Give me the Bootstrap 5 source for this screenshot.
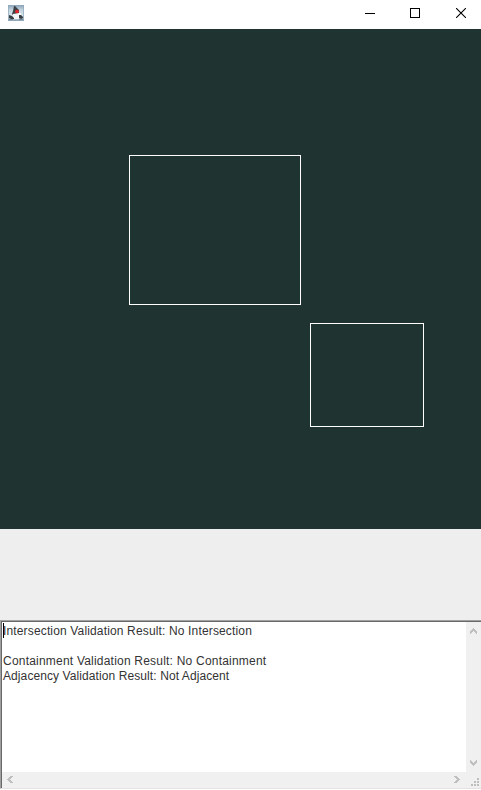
<!DOCTYPE html>
<html lang="en">
<head>
<meta charset="utf-8">
<title>Rectangles</title>
<link href="https://cdn.jsdelivr.net/npm/bootstrap@5.3.0/dist/css/bootstrap.min.css" rel="stylesheet">
<style>
body{font-family:"Liberation Sans",Arial,sans-serif;font-size:12px;line-height:15px;color:#333;background:#eee}
svg{display:block}
.app-window{height:790px}
.title-bar{height:29px;background:#fff;padding-left:8px}
.win-btn{height:26px;padding:0;border:0;background:none}
.btn-min{width:38px}
.btn-max{width:52px}
.btn-quit{width:40px}
.draw-area{height:500px;background:#1f3331}
.spacer-panel{height:91px;background:#eee}
.output-pane{height:169px;border-left:1px solid #a0a0a0;border-top:1px solid #a0a0a0;border-bottom:1px solid #e3e3e3}
.output-inner{border-left:1px solid #696969;border-top:1px solid #696969;background:#f0f0f0}
.output-text{background:#fff;height:150px;padding:2px 0 0 1px;white-space:pre}
.caret{width:1px;height:15px;background:#000;margin:-1px -1px 1px 0}
.v-bar{width:15px;height:150px;padding:6px 0}
.h-bar{height:16px;padding:0 5px 1px 4px}
.grip-area{width:15px;height:16px}
.base-line{height:1px;background:#fff}
.l1{letter-spacing:.15px}
.l2{letter-spacing:.21px}
.l3{letter-spacing:.09px}
</style>
<script src="https://cdn.jsdelivr.net/npm/bootstrap@5.3.0/dist/js/bootstrap.bundle.min.js"></script>
</head>
<body>
<div class="app-window d-flex flex-column overflow-hidden">
  <header class="title-bar d-flex justify-content-between">
    <svg class="mt-1" width="16" height="17" viewBox="0 0 16 17">
      <defs><linearGradient id="g" x2="0" y2="1"><stop stop-color="#8ba3b6"/><stop offset=".3" stop-color="#c3d3df"/><stop offset=".7" stop-color="#dce6ed"/><stop offset="1" stop-color="#8da2b2"/></linearGradient></defs>
      <rect y="1" width="16" height="16" fill="url(#g)"/>
      <path d="M.5 1.500h15v15H.5z" fill="none" stroke="#8fa9bc" stroke-opacity=".7"/>
      <path d="M6 2h1l2 2 2 2v3l-2 1-4 1-1-1 1-3z" fill="#3d4247"/>
      <path d="M5 10l6-1 1 4-1 2H5z" fill="#f4f5f6"/>
      <path d="M1 11l3 1 2 2v1H3l-2-1zM11 10l2 1 2 2v1l-2 1-2-1z" fill="#363d43"/>
      <path d="M11 9h2v2h-2z" fill="#fff"/>
      <ellipse cx="9" cy="7.500" rx="2" ry="1.800" fill="#e3242b"/>
      <path d="M1 15.500h4M11 15.500h4" stroke="#75899a"/>
    </svg>
    <div class="d-flex">
      <button class="win-btn btn-min d-flex align-items-center justify-content-center" aria-label="Minimize"><svg width="10" height="11" shape-rendering="crispEdges"><path d="M0 5.500h10" stroke="#000"/></svg></button>
      <button class="win-btn btn-max d-flex align-items-center justify-content-center" aria-label="Maximize"><svg width="10" height="10" shape-rendering="crispEdges"><path d="M.5.5h9v9h-9z" fill="none" stroke="#000"/></svg></button>
      <button class="win-btn btn-quit d-flex align-items-center justify-content-center" aria-label="Close"><svg width="10" height="10"><path d="M0 0l10 10M10 0L0 10" stroke="#000" stroke-width="1.100"/></svg></button>
    </div>
  </header>
  <main class="draw-area">
    <svg width="481" height="500" fill="none" stroke="#fff" shape-rendering="crispEdges">
      <rect x="129.500" y="126.500" width="171" height="149"/>
      <rect x="310.500" y="294.500" width="113" height="103"/>
    </svg>
  </main>
  <div class="spacer-panel"></div>
  <section class="output-pane">
    <div class="output-inner">
      <div class="d-flex">
        <div class="output-text flex-grow-1"><div class="d-flex"><span class="caret"></span><span class="l1">Intersection Validation Result: No Intersection</span></div><div>&nbsp;</div><div><span class="l2">Containment Validation Result: No Containment</span></div><div><span class="l3">Adjacency Validation Result: Not Adjacent</span></div></div>
        <div class="v-bar d-flex flex-column align-items-center justify-content-between">
          <svg width="7" height="6" fill="#bfbfbf" shape-rendering="crispEdges"><path d="M3 0h1v1h1v1h1v1h1v3h-1v-1h-1v-1h-1v-1h-1v1h-1v1h-1v1h-1v-3h1v-1h1v-1h1z"/></svg>
          <svg width="7" height="6" fill="#bfbfbf" shape-rendering="crispEdges"><path transform="matrix(1 0 0 -1 0 6)" d="M3 0h1v1h1v1h1v1h1v3h-1v-1h-1v-1h-1v-1h-1v1h-1v1h-1v1h-1v-3h1v-1h1v-1h1z"/></svg>
        </div>
      </div>
      <div class="d-flex">
        <div class="h-bar flex-grow-1 d-flex align-items-center justify-content-between">
          <svg width="7" height="7" fill="#bfbfbf" shape-rendering="crispEdges"><path transform="matrix(0 1 1 0 1 0)" d="M3 0h1v1h1v1h1v1h1v3h-1v-1h-1v-1h-1v-1h-1v1h-1v1h-1v1h-1v-3h1v-1h1v-1h1z"/></svg>
          <svg width="7" height="7" fill="#bfbfbf" shape-rendering="crispEdges"><path transform="matrix(0 1 -1 0 6 0)" d="M3 0h1v1h1v1h1v1h1v3h-1v-1h-1v-1h-1v-1h-1v1h-1v1h-1v1h-1v-3h1v-1h1v-1h1z"/></svg>
        </div>
        <div class="grip-area"><svg width="15" height="16" fill="#bfbfbf" shape-rendering="crispEdges"><path d="M11 6h2v2h-2zM8 9h2v2H8zM11 9h2v2h-2zM5 12h2v2H5zM8 12h2v2H8zM11 12h2v2h-2z"/></svg></div>
      </div>
    </div>
  </section>
  <div class="base-line"></div>
</div>
</body>
</html>
